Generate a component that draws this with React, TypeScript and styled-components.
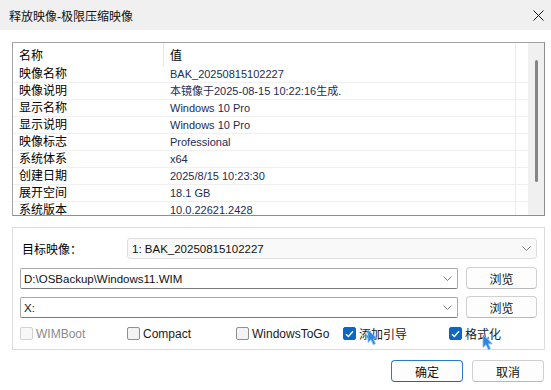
import styled, { createGlobalStyle } from "styled-components";

const GlobalStyle = createGlobalStyle`
  html, body {
    margin: 0;
    padding: 0;
    background: #ffffff;
  }
  body {
    font-family: "Liberation Sans", "Noto Sans CJK SC", sans-serif;
    font-size: 11.5px;
    color: #000;
  }
  * { box-sizing: border-box; }
`;

type Row = { name: string; value: string };

const rows: Row[] = [
  { name: "映像名称", value: "BAK_20250815102227" },
  { name: "映像说明", value: "本镜像于2025-08-15 10:22:16生成." },
  { name: "显示名称", value: "Windows 10 Pro" },
  { name: "显示说明", value: "Windows 10 Pro" },
  { name: "映像标志", value: "Professional" },
  { name: "系统体系", value: "x64" },
  { name: "创建日期", value: "2025/8/15 10:23:30" },
  { name: "展开空间", value: "18.1 GB" },
  { name: "系统版本", value: "10.0.22621.2428" },
];

const checks = [
  { label: "WIMBoot", checked: false, disabled: true },
  { label: "Compact", checked: false },
  { label: "WindowsToGo", checked: false },
  { label: "添加引导", checked: true, cursor: { x: 8, y: 4 } },
  { label: "格式化", checked: true, cursor: { x: 17, y: 9 } },
];

export default function App() {
  return (
    <>
      <GlobalStyle />
      <Window>
        <TitleBar>
          <Title>释放映像-极限压缩映像</Title>
          <CloseBtn>
            <svg width="11" height="11" viewBox="0 0 11 11">
              <path d="M0.5 0.5 L10.5 10.5 M10.5 0.5 L0.5 10.5" stroke="#1a1a1a" strokeWidth="1" />
            </svg>
          </CloseBtn>
        </TitleBar>
        <Body>
          <ListBox>
            <Table>
              <HeadRow>
                <HeadCell $divider>名称</HeadCell>
                <HeadCell>值</HeadCell>
                <EndCell />
              </HeadRow>
              {rows.map((r) => (
                <DataRow key={r.name}>
                  <NameCell>{r.name}</NameCell>
                  <ValueCell>{r.value}</ValueCell>
                  <EndCell />
                </DataRow>
              ))}
            </Table>
            <ScrollTrack>
              <ScrollThumb />
            </ScrollTrack>
          </ListBox>

          <Group>
            <FieldRow>
              <Label>目标映像：</Label>
              <Select>
                <span>1: BAK_20250815102227</span>
                <Chevron />
              </Select>
            </FieldRow>
            <FieldRow>
              <EditCombo>
                <span>D:\OSBackup\Windows11.WIM</span>
                <Chevron />
              </EditCombo>
              <Button>浏览</Button>
            </FieldRow>
            <FieldRow>
              <EditCombo>
                <span>X:</span>
                <Chevron />
              </EditCombo>
              <Button>浏览</Button>
            </FieldRow>
            <CheckRow>
              {checks.map((c) => (
                <CheckItem key={c.label} $disabled={c.disabled}>
                  <Box $checked={c.checked} $disabled={c.disabled}>
                    {c.checked && (
                      <svg width="9" height="8" viewBox="0 0 9 8">
                        <path d="M1 4.2 L3.4 6.5 L8 1.3" fill="none" stroke="#fff" strokeWidth="1.4" />
                      </svg>
                    )}
                  </Box>
                  <CheckLabel>
                    {c.label}
                    {c.cursor && (
                      <Cursor $x={c.cursor.x} $y={c.cursor.y} width="12" height="17" viewBox="0 0 12 17">
                        <path
                          d="M1 1 L1 13.5 L4 10.6 L6.3 15.6 L8.4 14.7 L6.2 9.8 L10.4 9.8 Z"
                          fill="#2f86df"
                          stroke="#7fb8ee"
                          strokeWidth="0.8"
                          strokeLinejoin="round"
                        />
                      </Cursor>
                    )}
                  </CheckLabel>
                </CheckItem>
              ))}
            </CheckRow>
          </Group>

          <Footer>
            <Button $primary $wide>确定</Button>
            <Button $wide>取消</Button>
          </Footer>
        </Body>
      </Window>
    </>
  );
}

function Chevron() {
  return (
    <ChevronIcon width="9" height="5" viewBox="0 0 9 5">
      <path d="M0.5 0.5 L4.5 4.5 L8.5 0.5" fill="none" stroke="#6b6b6b" strokeWidth="0.9" />
    </ChevronIcon>
  );
}

const Window = styled.div`
  width: 551px;
  height: 390px;
  background: #ffffff;
  display: flex;
  flex-direction: column;
  overflow: hidden;
`;

const TitleBar = styled.div`
  height: 30px;
  background: #f0f0f0;
  display: flex;
  align-items: center;
  justify-content: space-between;
  padding: 0 6px 0 9px;
`;

const Title = styled.div`
  font-size: 12px;
  color: #111;
`;

const CloseBtn = styled.div`
  width: 11px;
  height: 11px;
  display: flex;
  margin-right: 1px;
`;

const Body = styled.div`
  padding: 12px 6px 0 12px;
  display: flex;
  flex-direction: column;
`;

const ListBox = styled.div`
  height: 174px;
  border: 1px solid #a3a3a3;
  border-right-color: #8e8e8e;
  border-bottom-color: #8e8e8e;
  display: flex;
  overflow: hidden;
`;

const Table = styled.div`
  flex: 1;
  display: flex;
  flex-direction: column;
  overflow: hidden;
`;

const HeadRow = styled.div`
  height: 23px;
  flex: none;
  display: grid;
  grid-template-columns: 151px 351px 1fr;
`;

const HeadCell = styled.div<{ $divider?: boolean }>`
  display: flex;
  align-items: center;
  padding-left: 6px;
  font-size: 12px;
  border-right: ${(p) => (p.$divider ? "1px solid #e5e5e5" : "none")};
`;

const DataRow = styled.div`
  height: 17px;
  flex: none;
  display: grid;
  grid-template-columns: 151px 351px 1fr;
  border-bottom: 1px solid #f0f0f0;
`;

const NameCell = styled.div`
  padding-left: 6px;
  line-height: 16px;
  font-size: 12px;
  white-space: nowrap;
`;

const ValueCell = styled.div`
  padding-left: 6px;
  line-height: 16px;
  font-size: 11px;
  color: #1b2c55;
  white-space: nowrap;
`;

const EndCell = styled.div`
  border-left: 1px solid #ececec;
`;

const ScrollTrack = styled.div`
  width: 16px;
  background: #f0f0f0;
  display: flex;
  justify-content: center;
  padding-top: 17px;
`;

const ScrollThumb = styled.div`
  width: 3px;
  height: 122px;
  border-radius: 2px;
  background: #858585;
`;

const Group = styled.div`
  margin-top: 11px;
  height: 123px;
  border: 1px solid #dcdcdc;
  padding: 10px 7px 0 7px;
  display: flex;
  flex-direction: column;
  gap: 8px;
`;

const FieldRow = styled.div`
  height: 21px;
  display: flex;
  gap: 8px;
  &:nth-child(2) {
    margin-top: 1px;
  }
`;

const Label = styled.div`
  width: 99px;
  padding-left: 2px;
  display: flex;
  align-items: center;
  font-size: 12px;
`;

const Select = styled.div`
  flex: 1;
  height: 21px;
  background: #f9f9f9;
  border: 1px solid #dedede;
  border-radius: 3px;
  display: flex;
  align-items: center;
  justify-content: space-between;
  padding: 0 5px 0 4px;
  font-size: 11.5px;
  color: #111;
`;

const EditCombo = styled.div`
  flex: 1;
  height: 21px;
  background: #ffffff;
  border: 1px solid #a9a9a9;
  border-bottom-color: #7a7a7a;
  border-radius: 2px;
  display: flex;
  align-items: center;
  justify-content: space-between;
  padding: 0 5px 0 3px;
  font-size: 11.5px;
  color: #111;
`;

const ChevronIcon = styled.svg`
  flex: none;
`;

const Button = styled.div<{ $primary?: boolean; $wide?: boolean }>`
  width: ${(p) => (p.$wide ? "72px" : "71px")};
  height: 22px;
  background: #fdfdfd;
  border: 1px solid ${(p) => (p.$primary ? "#2b79c9" : "#d0d0d0")};
  border-bottom-color: ${(p) => (p.$primary ? "#1d64b3" : "#b9b9b9")};
  border-radius: 4px;
  display: flex;
  align-items: center;
  justify-content: center;
  font-size: 12px;
  color: #111;
  margin-top: -1px;
`;

const CheckRow = styled.div`
  height: 16px;
  margin-top: -1px;
  display: grid;
  grid-template-columns: 107px 109px 107px 106px 1fr;
`;

const CheckItem = styled.div<{ $disabled?: boolean }>`
  display: flex;
  align-items: center;
  gap: 3px;
  color: ${(p) => (p.$disabled ? "#8a8a8a" : "#1a1a1a")};
`;

const Box = styled.div<{ $checked?: boolean; $disabled?: boolean }>`
  width: 13px;
  height: 13px;
  border-radius: 2px;
  flex: none;
  display: flex;
  align-items: center;
  justify-content: center;
  background: ${(p) => (p.$checked ? "#0d67c2" : p.$disabled ? "#f7f7f7" : "#f3f3f3")};
  border: 1px solid
    ${(p) => (p.$checked ? "#0d67c2" : p.$disabled ? "#d2d2d2" : "#8f8f8f")};
`;

const CheckLabel = styled.span`
  position: relative;
  font-size: 12px;
  white-space: nowrap;
`;

const Cursor = styled.svg<{ $x: number; $y: number }>`
  position: absolute;
  left: ${(p) => p.$x}px;
  top: ${(p) => p.$y}px;
  pointer-events: none;
`;

const Footer = styled.div`
  display: flex;
  justify-content: flex-end;
  gap: 9px;
  padding: 11px 1px 0 0;
`;
